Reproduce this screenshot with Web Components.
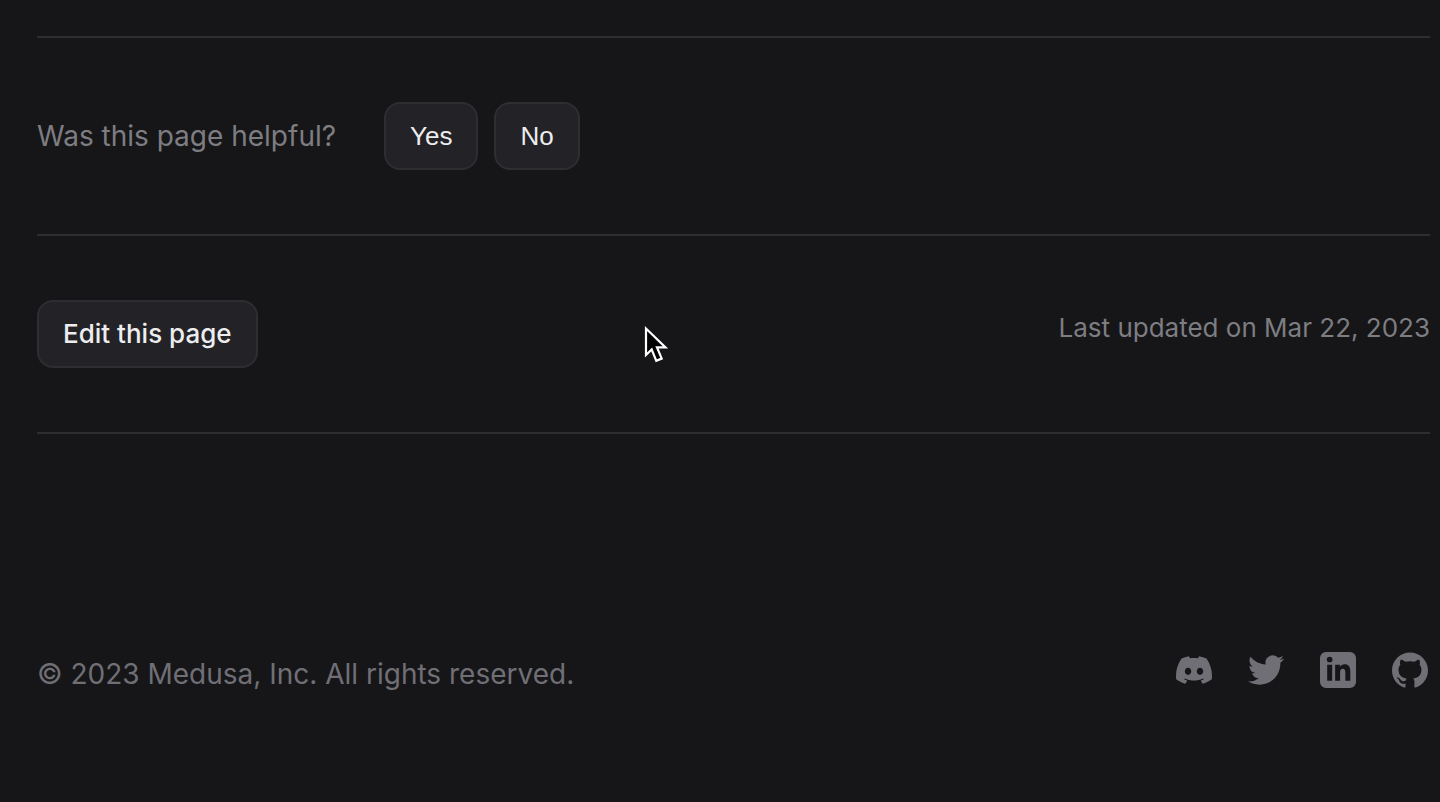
<!DOCTYPE html>
<html lang="en">
<head>
<meta charset="UTF-8">
<meta name="viewport" content="width=device-width, initial-scale=1">
<title>Medusa</title>
<style>
    body {
        margin: 0;
        background-color: #161618;
        color: #7d7d82;
        font-family: Inter, "Liberation Sans", sans-serif;
    }
</style>
</head>
<body>
<docs-page>
    <docs-row>
        <page-feedback>Was this page helpful?</page-feedback>
    </docs-row>
    <docs-row>
        <docs-button href="#edit">Edit this page</docs-button>
        <last-updated slot="end">Last updated on Mar 22, 2023</last-updated>
    </docs-row>
    <docs-footer slot="footer">
        © 2023 Medusa, Inc. All rights reserved.
        <social-link slot="social" name="discord" label="Discord" href="#discord"></social-link>
        <social-link slot="social" name="twitter" label="Twitter" href="#twitter"></social-link>
        <social-link slot="social" name="linkedin" label="LinkedIn" href="#linkedin"></social-link>
        <social-link slot="social" name="github" label="GitHub" href="#github"></social-link>
    </docs-footer>
</docs-page>
<mouse-cursor></mouse-cursor>

<script>
class DocsPage extends HTMLElement {
    connectedCallback() {
        const shadowRoot = this.attachShadow({ mode: 'open' });
        shadowRoot.innerHTML = `
            <style>
                :host {
                    display: flex;
                    flex-direction: column;
                    box-sizing: border-box;
                    min-height: 100vh;
                    padding: 36px 10px 0 37px;
                    border-bottom: 1px solid #000;
                }
                main {
                    border-bottom: 2px solid #2e2e32;
                }
            </style>
            <main><slot></slot></main>
            <slot name="footer"></slot>
        `;
    }
}

customElements.define("docs-page", DocsPage);

class DocsRow extends HTMLElement {
    connectedCallback() {
        const shadowRoot = this.attachShadow({ mode: 'open' });
        shadowRoot.innerHTML = `
            <style>
                :host {
                    display: flex;
                    justify-content: space-between;
                    padding: 64px 0;
                    border-top: 2px solid #2e2e32;
                }
            </style>
            <slot></slot>
            <slot name="end"></slot>
        `;
    }
}

customElements.define("docs-row", DocsRow);

// Renders a link when it has an href, a button otherwise
class DocsButton extends HTMLElement {
    connectedCallback() {
        const shadowRoot = this.attachShadow({ mode: 'open' });
        const href = this.getAttribute('href');
        const style = `
            <style>
                :host {
                    display: block;
                }
                a, button {
                    display: block;
                    margin: 0;
                    padding: 14px 24px;
                    border: 2px solid #2e2e32;
                    border-radius: 16px;
                    background-color: #232327;
                    color: #ededef;
                    font-size: 26px;
                    line-height: 36px;
                    text-decoration: none;
                    cursor: pointer;
                }
                a {
                    font-weight: 500;
                }
                button {
                    font-family: "Liberation Sans", Arial, sans-serif;
                }
                a:hover, button:hover {
                    background-color: #2e2e32;
                }
            </style>
        `;
        shadowRoot.innerHTML = style + (href
            ? `<a href="${href}"><slot></slot></a>`
            : `<button type="button"><slot></slot></button>`);
    }
}

customElements.define("docs-button", DocsButton);

class PageFeedback extends HTMLElement {
    connectedCallback() {
        const shadowRoot = this.attachShadow({ mode: 'open' });
        shadowRoot.innerHTML = `
            <style>
                :host {
                    display: flex;
                    align-items: center;
                    font-size: 28px;
                    line-height: 40px;
                }
                .botones {
                    display: flex;
                    gap: 16px;
                    margin-left: 48px;
                }
            </style>
            <span><slot></slot></span>
            <div class="botones">
                <docs-button>Yes</docs-button>
                <docs-button>No</docs-button>
            </div>
        `;
    }
}

customElements.define("page-feedback", PageFeedback);

class LastUpdated extends HTMLElement {
    connectedCallback() {
        const shadowRoot = this.attachShadow({ mode: 'open' });
        shadowRoot.innerHTML = `
            <style>
                :host {
                    display: block;
                    padding-top: 8px;
                    font-size: 26px;
                    line-height: 40px;
                }
            </style>
            <slot></slot>
        `;
    }
}

customElements.define("last-updated", LastUpdated);

class DocsFooter extends HTMLElement {
    connectedCallback() {
        const shadowRoot = this.attachShadow({ mode: 'open' });
        shadowRoot.innerHTML = `
            <style>
                :host {
                    display: block;
                    padding: 216px 0 104px;
                    color: #706f76;
                }
                footer {
                    display: flex;
                    justify-content: space-between;
                    align-items: flex-start;
                    font-size: 28px;
                    line-height: 48px;
                }
                .social {
                    display: flex;
                    gap: 32px;
                }
            </style>
            <footer>
                <span><slot></slot></span>
                <div class="social"><slot name="social"></slot></div>
            </footer>
        `;
    }
}

customElements.define("docs-footer", DocsFooter);

const iconos = {
    discord: `<path d="M20.317 4.3698a19.7913 19.7913 0 00-4.8851-1.5152.0741.0741 0 00-.0785.0371c-.211.3753-.4447.8648-.6083 1.2495-1.8447-.2762-3.68-.2762-5.4868 0-.1636-.3933-.4058-.8742-.6177-1.2495a.077.077 0 00-.0785-.037 19.7363 19.7363 0 00-4.8852 1.515.0699.0699 0 00-.0321.0277C.5334 9.0458-.319 13.5799.0992 18.0578a.0824.0824 0 00.0312.0561c2.0528 1.5076 4.0413 2.4228 5.9929 3.0294a.0777.0777 0 00.0842-.0276c.4616-.6304.8731-1.2952 1.226-1.9942a.076.076 0 00-.0416-.1057c-.6528-.2476-1.2743-.5495-1.8722-.8923a.077.077 0 01-.0076-.1277c.1258-.0943.2517-.1923.3718-.2914a.0743.0743 0 01.0776-.0105c3.9278 1.7933 8.18 1.7933 12.0614 0a.0739.0739 0 01.0785.0095c.1202.099.246.1981.3728.2924a.077.077 0 01-.0066.1276 12.2986 12.2986 0 01-1.873.8914.0766.0766 0 00-.0407.1067c.3604.698.7719 1.3628 1.225 1.9932a.076.076 0 00.0842.0286c1.961-.6067 3.9495-1.5219 6.0023-3.0294a.077.077 0 00.0313-.0552c.5004-5.177-.8382-9.6739-3.5485-13.6604a.061.061 0 00-.0312-.0286zM8.02 15.3312c-1.1825 0-2.1569-1.0857-2.1569-2.419 0-1.3332.9555-2.4189 2.157-2.4189 1.2108 0 2.1757 1.0952 2.1568 2.419 0 1.3332-.9555 2.4189-2.1569 2.4189zm7.9748 0c-1.1825 0-2.1569-1.0857-2.1569-2.419 0-1.3332.9554-2.4189 2.1569-2.4189 1.2108 0 2.1757 1.0952 2.1568 2.419 0 1.3332-.946 2.4189-2.1568 2.4189z"/>`,
    twitter: `<path d="M23.953 4.57a10 10 0 01-2.825.775 4.958 4.958 0 002.163-2.723c-.951.555-2.005.959-3.127 1.184a4.92 4.92 0 00-8.384 4.482C7.69 8.095 4.067 6.13 1.64 3.162a4.822 4.822 0 00-.666 2.475c0 1.71.87 3.213 2.188 4.096a4.904 4.904 0 01-2.228-.616v.06a4.923 4.923 0 003.946 4.827 4.996 4.996 0 01-2.212.085 4.936 4.936 0 004.604 3.417 9.867 9.867 0 01-6.102 2.105c-.39 0-.779-.023-1.17-.067a13.995 13.995 0 007.557 2.209c9.053 0 13.998-7.496 13.998-13.985 0-.21 0-.42-.015-.63A9.935 9.935 0 0024 4.59z"/>`,
    linkedin: `<path fill-rule="evenodd" d="M4 0h16a4 4 0 014 4v16a4 4 0 01-4 4H4a4 4 0 01-4-4V4a4 4 0 014-4zM4.8 8.500v10.600h3.300V8.500zM6.450 3.100a1.900 1.900 0 100 3.800 1.900 1.900 0 000-3.800zM10.100 8.500v10.600h3.300v-5.500c0-1.500.5-2.500 1.800-2.500 1.300 0 1.700 1 1.700 2.500v5.500h3.300v-6.200c0-3-1.300-4.700-3.700-4.700-1.500 0-2.600.7-3.200 1.800V8.500z"/>`,
    github: `<path fill-rule="evenodd" d="M12 .297c-6.63 0-12 5.373-12 12 0 5.303 3.438 9.8 8.205 11.385.6.113.82-.258.82-.577 0-.285-.01-1.04-.015-2.04-3.338.724-4.042-1.61-4.042-1.61C4.422 18.07 3.633 17.7 3.633 17.7c-1.087-.744.084-.729.084-.729 1.205.084 1.838 1.236 1.838 1.236 1.07 1.835 2.809 1.305 3.495.998.108-.776.417-1.305.76-1.605-2.665-.3-5.466-1.332-5.466-5.93 0-1.31.465-2.38 1.235-3.22-.135-.303-.54-1.523.105-3.176 0 0 1.005-.322 3.3 1.23.96-.267 1.98-.399 3-.405 1.02.006 2.04.138 3 .405 2.28-1.552 3.285-1.23 3.285-1.23.645 1.653.24 2.873.12 3.176.765.84 1.23 1.91 1.23 3.22 0 4.61-2.805 5.625-5.475 5.92.42.36.81 1.096.81 2.22 0 1.606-.015 2.896-.015 3.286 0 .315.21.69.825.57C20.565 22.092 24 17.592 24 12.297c0-6.627-5.373-12-12-12"/>`
};

class SocialLink extends HTMLElement {
    connectedCallback() {
        const shadowRoot = this.attachShadow({ mode: 'open' });
        shadowRoot.innerHTML = `
            <style>
                :host {
                    display: block;
                }
                a {
                    display: block;
                    padding: 2px;
                    color: inherit;
                }
                svg {
                    display: block;
                    width: 36px;
                    height: 36px;
                    fill: currentColor;
                }
            </style>
            <a href="${this.getAttribute('href')}" aria-label="${this.getAttribute('label')}">
                <svg viewBox="0 0 24 24" aria-hidden="true">${iconos[this.getAttribute('name')]}</svg>
            </a>
        `;
    }
}

customElements.define("social-link", SocialLink);

class MouseCursor extends HTMLElement {
    connectedCallback() {
        const shadowRoot = this.attachShadow({ mode: 'open' });
        shadowRoot.innerHTML = `
            <style>
                :host {
                    position: absolute;
                    top: 324px;
                    left: 643px;
                    pointer-events: none;
                }
                svg {
                    display: block;
                }
            </style>
            <svg width="28" height="40" viewBox="0 0 28 40" aria-hidden="true">
                <path d="M3 4.5V31l5.700-5.500 4.600 11.300 5.400-2.200-4.700-11.200H22.500z" fill="#000" stroke="#fff" stroke-width="2.2"/>
            </svg>
        `;
    }
}

customElements.define("mouse-cursor", MouseCursor);
</script>
</body>
</html>
